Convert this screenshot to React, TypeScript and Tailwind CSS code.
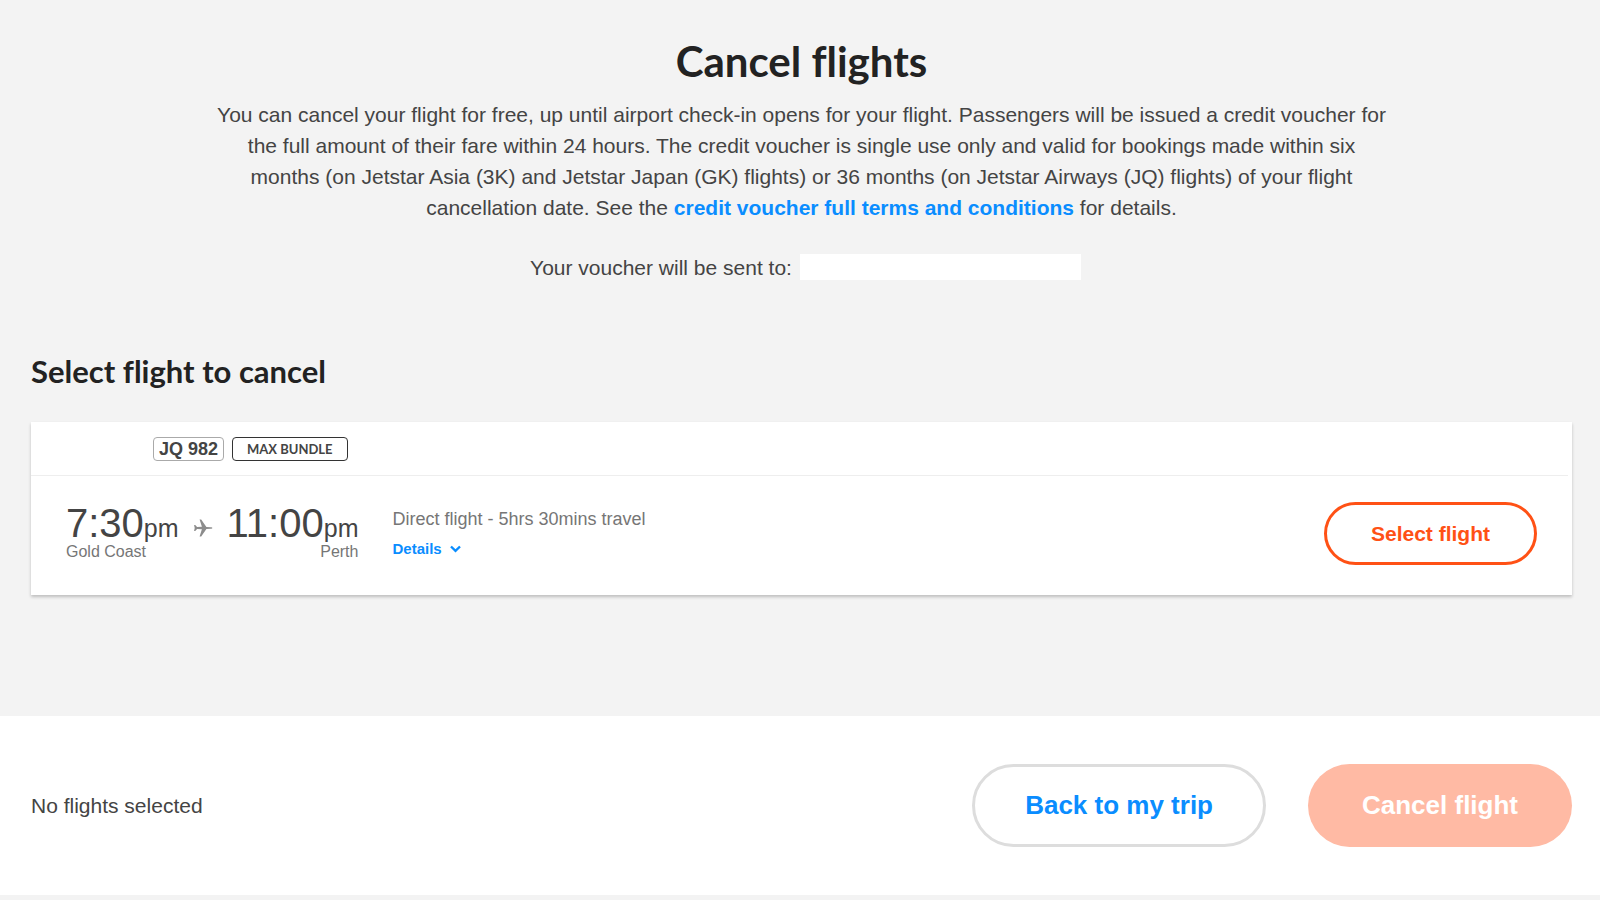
import { useState } from 'react';

const PlaneIcon = () => (
  <svg viewBox="0 0 20 18" className="w-5 h-[18px] shrink-0" fill="#8c8c8c" aria-hidden="true">
    <path d="M6.600 0.400h1.600l5.200 7.500 4.300.3c1.100.1 1.700.4 1.700.8s-.6.7-1.700.8l-4.300.3-5.200 7.500H6.600l2.300-7.400-4.800-.3-1.900 2.200H1.100L1.700 9 1.100 5.900h1.100l1.900 2.200 4.800-.3z" />
  </svg>
);

const ChevronIcon = () => (
  <svg viewBox="0 0 11 8" className="w-[11px] h-2" fill="none" stroke="currentColor" strokeWidth="2.4" aria-hidden="true">
    <path d="M1 1.500l4.500 4.300L10 1.500" />
  </svg>
);

type TimeProps = {
  time: string;
  city: string;
  className?: string;
};

function FlightTime({ time, city, className = '' }: TimeProps) {
  return (
    <div className={className}>
      <p className="text-[40px] leading-8 text-[#444]">
        {time}
        <span className="text-[25px]">pm</span>
      </p>
      <p className="text-base leading-4 text-[#767676]">{city}</p>
    </div>
  );
}

export default function App() {
  const [email, setEmail] = useState('');

  return (
    <div className="min-h-screen bg-[#f3f3f3] font-['Liberation_Sans',Arial,sans-serif] text-[21px] leading-[31px] text-[#444]">
      <main className="pl-[31px] pr-7 pt-[35px] pb-[121px]">
        <header className="max-w-[1180px] mx-auto text-center">
          <h1 className="font-[Lato,sans-serif] [font-variant-ligatures:none] text-[42px] leading-[52px] font-bold text-[#222] mb-3">Cancel flights</h1>
          <p>
            You can cancel your flight for free, up until airport check-in opens for your flight. Passengers will be issued a credit voucher for the full amount of their fare within 24 hours. The credit voucher is single use only and valid for bookings made within six months (on Jetstar Asia (3K) and Jetstar Japan (GK) flights) or 36 months (on Jetstar Airways (JQ) flights) of your flight cancellation date. See the{' '}
            <a href="#terms" className="font-bold text-[#0a8dff]">credit voucher full terms and conditions</a>{' '}
            for details.
          </p>
          <div className="flex items-center justify-center gap-2 mt-7 pl-2 h-8">
            <label htmlFor="voucher-email">Your voucher will be sent to:</label>
            <input
              id="voucher-email"
              type="email"
              value={email}
              onChange={e => setEmail(e.target.value)}
              className="w-[281px] h-[26px] px-2 bg-white text-base focus:outline-none"
            />
          </div>
        </header>

        <h2 className="mt-[68px] mb-[31px] font-[Lato,sans-serif] [font-variant-ligatures:none] text-[31px] leading-10 font-bold text-[#222]">Select flight to cancel</h2>

        <section className="bg-white shadow-[0_2px_3px_rgba(0,0,0,0.22)]">
          <div className="flex items-center gap-2 pl-[122px] mr-1 h-[54px] border-b border-[#eee]">
            <span className="px-[5px] h-6 rounded border border-[#aaa] text-lg leading-[22px] font-bold">JQ 982</span>
            <span className="px-[14px] h-6 rounded border border-[#333] font-[Lato,sans-serif] text-[13px] leading-[22px] font-bold">MAX BUNDLE</span>
          </div>
          <div className="flex items-center px-[35px] pt-[26px] pb-[30px]">
            <div className="flex items-center">
              <FlightTime time="7:30" city="Gold Coast" />
              <div className="px-[14px] pb-3">
                <PlaneIcon />
              </div>
              <FlightTime time="11:00" city="Perth" className="text-right" />
            </div>
            <div className="ml-[34px]">
              <p className="text-lg leading-[30px] text-[#767676]">Direct flight - 5hrs 30mins travel</p>
              <button className="flex items-center gap-2 text-[15px] leading-[30px] font-bold text-[#0a8dff]">
                Details
                <ChevronIcon />
              </button>
            </div>
            <button className="ml-auto px-11 h-[63px] rounded-full border-[3px] border-[#ff5115] font-bold text-[#ff5115]">
              Select flight
            </button>
          </div>
        </section>
      </main>

      <footer className="flex items-center justify-between bg-white pl-[31px] pr-7 py-12">
        <p>No flights selected</p>
        <div className="flex gap-[42px] text-[26px] font-bold">
          <button className="px-[50px] h-[83px] rounded-full border-[3px] border-[#ddd] text-[#0a8dff]">Back to my trip</button>
          <button disabled className="px-[54px] h-[83px] rounded-full bg-[#ffbaa4] text-white">Cancel flight</button>
        </div>
      </footer>
    </div>
  );
}
